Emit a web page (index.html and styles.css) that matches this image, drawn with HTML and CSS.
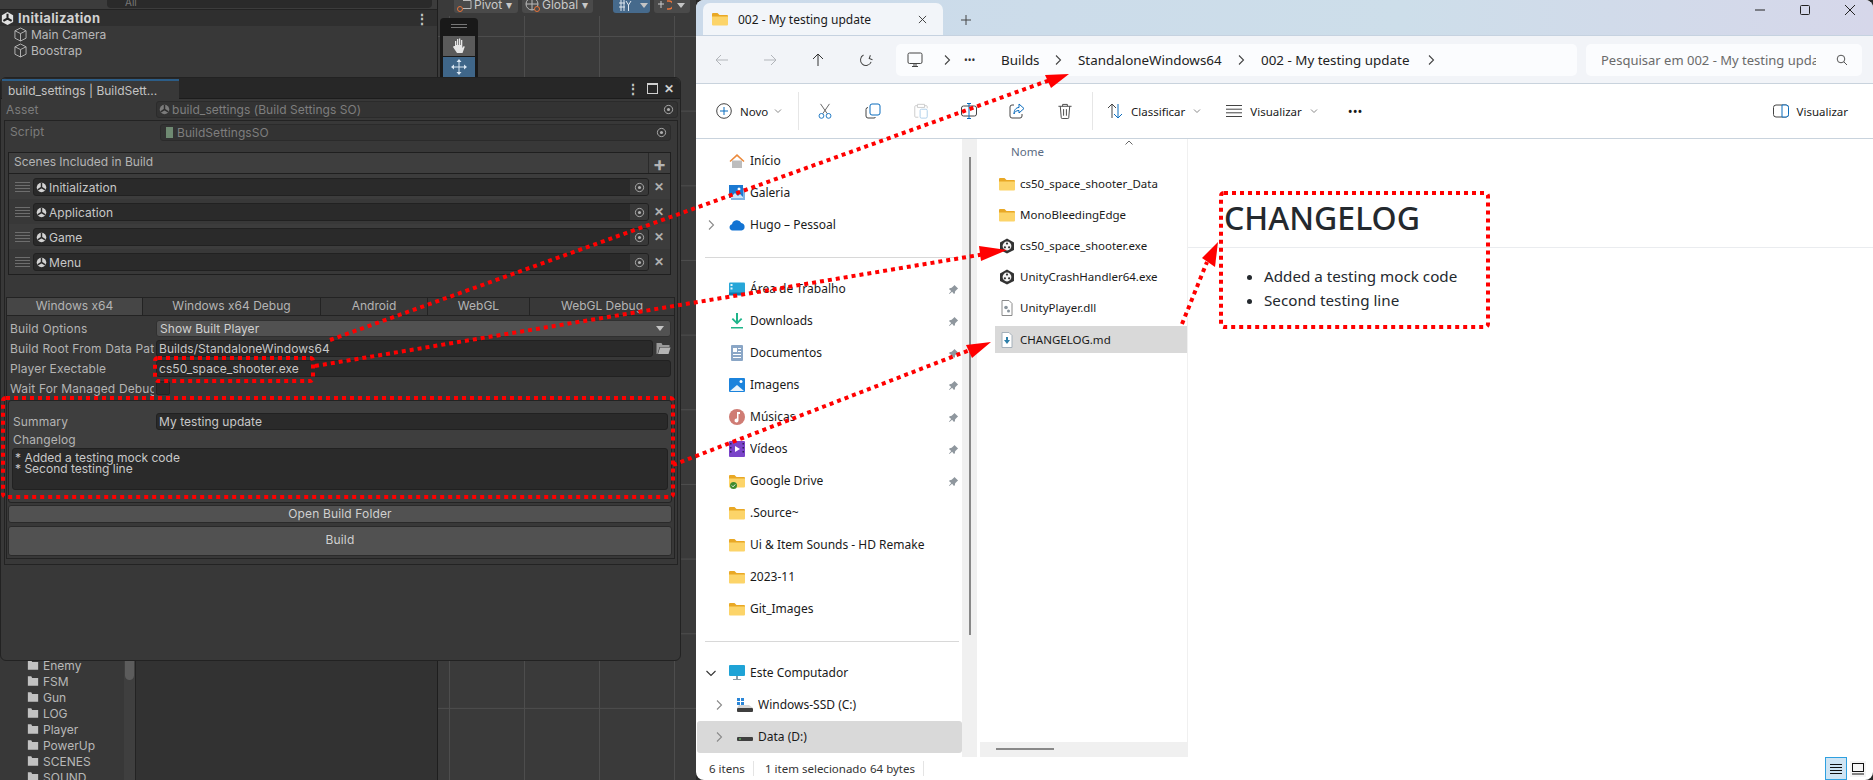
FILE: index.html
```html
<!DOCTYPE html>
<html lang="en">
<head>
    <meta charset="UTF-8">
    <title>Build settings and changelog</title>
    <link rel="stylesheet" href="styles.css">
</head>
<body>
    <!-- icon sprites -->
    <svg class="sprites" width="0" height="0">
        <defs>
            <symbol id="i-unity" viewBox="0 0 16 16"><path d="M8 1l6 3.400v7.200L8 15l-6-3.400V4.400z" fill="#e2e2e2"/><path d="M8 8V3M8 8l4.400 2.600M8 8l-4.400 2.600" stroke="#242424" stroke-width="2.200"/></symbol>
            <symbol id="i-scene" viewBox="0 0 12 12"><circle cx="6" cy="6" r="5.200" fill="#d2d2d2"/><path d="M6 6V1M6 6l4.200 2.500M6 6L1.800 8.500" stroke="#2a2a2a" stroke-width="1.600"/></symbol>
            <symbol id="i-cube" viewBox="0 0 14 16"><path d="M7 1l6 3v8l-6 3-6-3V4zM1 4l6 3 6-3M7 7v8" fill="none" stroke="#b8b8b8"/></symbol>
            <symbol id="i-target" viewBox="0 0 12 12"><circle cx="6" cy="6" r="4.500" fill="none" stroke="#b0b0b0"/><circle cx="6" cy="6" r="1.700" fill="#b0b0b0"/></symbol>
            <symbol id="i-ufolder" viewBox="0 0 14 13"><path d="M1 1h4l1 2h7v9H1z" fill="#c2c2c2"/></symbol>
            <symbol id="i-folder" viewBox="0 0 16 14"><path d="M0 2a1 1 0 011-1h4.500l2 2H15a1 1 0 011 1v1H0z" fill="#e9a825"/><path d="M0 4.500h16V12.500a1 1 0 01-1 1H1a1 1 0 01-1-1z" fill="#fcd469"/></symbol>
            <symbol id="i-pin" viewBox="0 0 12 12"><path d="M7 1l4 4-1 .6-2.200 2.400-.3 2-1 1-2-2.500L1.500 11 1 10.500 3.500 7.500 1 5.500l1-1 2-.3L6.400 2z" fill="#8f979e"/></symbol>
            <symbol id="i-chev" viewBox="0 0 8 12"><path d="M2 1.500L6.500 6 2 10.500" fill="none" stroke="currentColor" stroke-width="1.100"/></symbol>
            <symbol id="i-caret" viewBox="0 0 8 6"><path d="M1 1.500L4 4.500 7 1.500" fill="none" stroke="#8a8a8a"/></symbol>
            <symbol id="i-drive" viewBox="0 0 16 8"><path d="M3 0h10l3 4H0z" fill="#d5d5d5"/><rect y="4" width="16" height="4" rx="1" fill="#3f3f3f"/><rect x="2" y="5.500" width="2" height="1" fill="#6fdc6f"/></symbol>
            <symbol id="i-exe" viewBox="0 0 16 16"><path d="M8 .5l7 4v7.500l-7 3.600-7-3.600V4.500z" fill="#333"/><circle cx="8" cy="8" r="4.400" fill="#f4f4f4"/><circle cx="8" cy="5.600" r="1.100" fill="#333"/><circle cx="5.900" cy="9.300" r="1.100" fill="#333"/><circle cx="10.100" cy="9.300" r="1.100" fill="#333"/></symbol>
        </defs>
    </svg>

    <!-- unity editor in the back -->
    <div class="unity">
        <div class="unity-left">
            <div class="hierarchy">
                <div class="search-row"><div class="search-box"><span>All</span></div></div>
                <div class="scene-head">
                    <svg class="ico-16"><use href="#i-unity"/></svg>
                    <span>Initialization</span>
                    <b class="kebab">⋮</b>
                </div>
                <div class="tree-item"><svg class="ico-cube"><use href="#i-cube"/></svg>Main Camera</div>
                <div class="tree-item"><svg class="ico-cube"><use href="#i-cube"/></svg>Boostrap</div>
            </div>
            <div class="project">
                <div class="project-tree">
                    <div class="project-item"><svg class="ico-ufolder"><use href="#i-ufolder"/></svg>Enemy</div>
                    <div class="project-item"><svg class="ico-ufolder"><use href="#i-ufolder"/></svg>FSM</div>
                    <div class="project-item"><svg class="ico-ufolder"><use href="#i-ufolder"/></svg>Gun</div>
                    <div class="project-item"><svg class="ico-ufolder"><use href="#i-ufolder"/></svg>LOG</div>
                    <div class="project-item"><svg class="ico-ufolder"><use href="#i-ufolder"/></svg>Player</div>
                    <div class="project-item"><svg class="ico-ufolder"><use href="#i-ufolder"/></svg>PowerUp</div>
                    <div class="project-item"><svg class="ico-ufolder"><use href="#i-ufolder"/></svg>SCENES</div>
                    <div class="project-item"><svg class="ico-ufolder"><use href="#i-ufolder"/></svg>SOUND</div>
                </div>
                <div class="project-scroll"><div class="project-thumb"></div></div>
                <div class="project-files"></div>
            </div>
        </div>
        <div class="scene-view">
            <div class="scene-bar">
                <span class="scene-btn pivot">
                    <svg width="16" height="13" viewBox="0 0 16 13"><path d="M7 .5h8v8H7" fill="none" stroke="#bbb"/><circle cx="4" cy="9" r="2.500" fill="none" stroke="#e8743b"/></svg>
                    Pivot ▾
                </span>
                <span class="scene-btn global">
                    <svg width="16" height="13" viewBox="0 0 16 13"><circle cx="8" cy="4" r="6" fill="none" stroke="#bbb"/><path d="M2 4h12M8 -2v12" stroke="#bbb" fill="none"/><circle cx="13" cy="9" r="2.500" fill="#4a4a4a" stroke="#e8743b"/></svg>
                    Global ▾
                </span>
                <span class="scene-btn blue">
                    <svg width="14" height="12" viewBox="0 0 14 12"><path d="M1 3h6M1 7h6M3 0v11M6 0v11M8 1l2.500 4L13 1M10.500 5v6" stroke="#e0e8f0" fill="none"/></svg>
                    <i class="mini-arrow"></i>
                </span>
                <span class="scene-btn snap">
                    <svg width="14" height="12" viewBox="0 0 14 12"><path d="M0 4h6M3 1v7" stroke="#ccc" fill="none"/><path d="M9 1h2a3.500 3.500 0 010 8H9" stroke="#e8743b" stroke-width="1.500" fill="none"/></svg>
                    <i class="mini-arrow"></i>
                </span>
            </div>
            <div class="scene-tools">
                <div class="tools-grip"></div>
                <div class="tool hand">
                    <svg width="16" height="18" viewBox="0 0 16 18"><path d="M4 9V4h1.300v4h.7V2h1.300v6h.7V1.500h1.300V8h.7V3h1.300v8l1.500-2 1 .7L11.500 16H6L2 10l.8-1z" fill="#e6e6e6"/></svg>
                </div>
                <div class="tool move">
                    <svg width="18" height="18" viewBox="0 0 18 18"><path d="M9 1L6.500 4h5zM9 17l-2.500-3h5zM1 9l3-2.500v5zM17 9l-3-2.500v5zM8.500 4h1v10h-1zM4 8.500h10v1H4z" fill="#d9e6f2"/></svg>
                </div>
            </div>
        </div>
    </div>

    <!-- floating build settings window -->
    <div class="build-window">
        <div class="tabstrip">
            <div class="tab">build_settings | BuildSett...</div>
            <div class="win-actions">
                <b class="kebab">⋮</b>
                <span class="maximize"></span>
                <span class="close-x">✕</span>
            </div>
        </div>
        <div class="asset-row">
            <span class="label dim">Asset</span>
            <div class="field dim-field">
                <svg class="ico-small faded"><use href="#i-scene"/></svg>
                <span class="grow">build_settings (Build Settings SO)</span>
                <svg class="ico-small"><use href="#i-target"/></svg>
            </div>
        </div>
        <div class="inspector">
            <div class="script-row">
                <span class="label dim">Script</span>
                <div class="field dim-field">
                    <span class="script-ico"></span>
                    <span class="grow">BuildSettingsSO</span>
                    <svg class="ico-small"><use href="#i-target"/></svg>
                </div>
            </div>

            <div class="scene-list">
                <div class="list-head"><span>Scenes Included in Build</span><b class="add">+</b></div>
                <div class="scene-row">
                    <span class="grip"></span>
                    <div class="field"><svg class="ico-small"><use href="#i-scene"/></svg><span class="grow">Initialization</span><span class="pick"><svg class="ico-small"><use href="#i-target"/></svg></span></div>
                    <span class="remove">✕</span>
                </div>
                <div class="scene-row alt">
                    <span class="grip"></span>
                    <div class="field"><svg class="ico-small"><use href="#i-scene"/></svg><span class="grow">Application</span><span class="pick"><svg class="ico-small"><use href="#i-target"/></svg></span></div>
                    <span class="remove">✕</span>
                </div>
                <div class="scene-row">
                    <span class="grip"></span>
                    <div class="field"><svg class="ico-small"><use href="#i-scene"/></svg><span class="grow">Game</span><span class="pick"><svg class="ico-small"><use href="#i-target"/></svg></span></div>
                    <span class="remove">✕</span>
                </div>
                <div class="scene-row alt">
                    <span class="grip"></span>
                    <div class="field"><svg class="ico-small"><use href="#i-scene"/></svg><span class="grow">Menu</span><span class="pick"><svg class="ico-small"><use href="#i-target"/></svg></span></div>
                    <span class="remove">✕</span>
                </div>
            </div>

            <div class="platform-tabs">
                <span class="ptab active w1">Windows x64</span>
                <span class="ptab w2">Windows x64 Debug</span>
                <span class="ptab w3">Android</span>
                <span class="ptab w4">WebGL</span>
                <span class="ptab w5">WebGL Debug</span>
            </div>
            <div class="platform-body">
                <div class="prop-row">
                    <span class="label">Build Options</span>
                    <div class="field select"><span class="grow">Show Built Player</span><i class="select-arrow"></i></div>
                </div>
                <div class="prop-row">
                    <span class="label">Build Root From Data Path</span>
                    <div class="field"><span class="grow">Builds/StandaloneWindows64</span></div>
                    <svg class="ico-open" viewBox="0 0 14 13"><path d="M0 1h5l1 2h7v2H3L1 12H0z" fill="#9a9a9a"/><path d="M3.500 5.500H14L12 12H1.500z" fill="#b4b4b4"/></svg>
                </div>
                <div class="prop-row">
                    <span class="label">Player Exectable</span>
                    <div class="field"><span class="grow">cs50_space_shooter.exe</span></div>
                </div>
                <div class="prop-row">
                    <span class="label">Wait For Managed Debugger</span>
                    <span class="checkbox"></span>
                </div>
                <div class="changelog-box">
                    <div class="prop-row summary-row">
                        <span class="label inner">Summary</span>
                        <div class="field"><span class="grow">My testing update</span></div>
                    </div>
                    <div class="label changelog-label">Changelog</div>
                    <div class="textarea">* Added a testing mock code<br>* Second testing line</div>
                </div>
                <div class="unity-btn open-btn">Open Build Folder</div>
                <div class="unity-btn build-btn">Build</div>
            </div>
        </div>
    </div>

    <!-- file explorer -->
    <div class="explorer">
        <div class="titlebar">
            <div class="ex-tab">
                <svg class="ico-tab"><use href="#i-folder"/></svg>
                <span class="grow">002 - My testing update</span>
                <svg class="ico-x" viewBox="0 0 10 10"><path d="M1 1l8 8M9 1l-8 8" stroke="#333" fill="none"/></svg>
            </div>
            <svg class="new-tab" viewBox="0 0 10 10"><path d="M5 0v10M0 5h10" stroke="#444" fill="none"/></svg>
            <div class="win-btns">
                <svg viewBox="0 0 10 10"><path d="M0 5h10" stroke="#222" fill="none"/></svg>
                <svg viewBox="0 0 10 10"><rect x=".5" y=".5" width="9" height="9" rx="1" stroke="#222" fill="none"/></svg>
                <svg viewBox="0 0 10 10"><path d="M0 0l10 10M10 0L0 10" stroke="#222" fill="none"/></svg>
            </div>
        </div>
        <div class="addressbar">
            <div class="nav-btns">
                <svg viewBox="0 0 14 14"><path d="M13 7H1M6 2L1 7l5 5" stroke="#b2b5ba" fill="none"/></svg>
                <svg viewBox="0 0 14 14"><path d="M1 7h12M8 2l5 5-5 5" stroke="#b2b5ba" fill="none"/></svg>
                <svg viewBox="0 0 14 14"><path d="M7 13V1M2 6l5-5 5 5" stroke="#333" fill="none"/></svg>
                <svg viewBox="0 0 14 14"><path d="M12.500 7A5.500 5.500 0 113 3.200M9.500 1v3.500H13" transform="rotate(20 7 7)" stroke="#444" fill="none"/></svg>
            </div>
            <div class="crumbs">
                <svg class="ico-monitor" viewBox="0 0 16 16"><rect x="1" y="1" width="14" height="10.500" rx="1.500" fill="none" stroke="#444"/><path d="M5 14.500h6M7 12v2M9 12v2" stroke="#444" fill="none"/></svg>
                <svg class="crumb-chev m1"><use href="#i-chev"/></svg>
                <span class="crumb-dots">•••</span>
                <span class="crumb c1">Builds</span>
                <svg class="crumb-chev"><use href="#i-chev"/></svg>
                <span class="crumb c2">StandaloneWindows64</span>
                <svg class="crumb-chev"><use href="#i-chev"/></svg>
                <span class="crumb c3">002 - My testing update</span>
                <svg class="crumb-chev"><use href="#i-chev"/></svg>
            </div>
            <div class="searchbox">
                <span class="grow clip">Pesquisar em 002 - My testing update</span>
                <svg class="ico-search" viewBox="0 0 12 12"><circle cx="5" cy="5" r="3.800" stroke="#555" fill="none"/><path d="M7.800 7.800L11 11" stroke="#555" fill="none"/></svg>
            </div>
        </div>
        <div class="toolbar">
            <div class="tb-novo">
                <svg class="tb-ico" viewBox="0 0 16 16"><circle cx="8" cy="8" r="7.300" fill="none" stroke="#444"/><path d="M8 4v8M4 8h8" stroke="#0b6cbd" fill="none"/></svg>
                <span>Novo</span>
                <svg class="caret"><use href="#i-caret"/></svg>
            </div>
            <i class="tb-sep"></i>
            <div class="tb-icons">
                <svg class="tb-ico" viewBox="0 0 16 18"><path d="M3 1l7.500 11M13 1L5.500 12" stroke="#555" fill="none"/><circle cx="4" cy="14.500" r="2.700" stroke="#0b6cbd" fill="none"/><circle cx="12" cy="14.500" r="2.700" stroke="#0b6cbd" fill="none"/></svg>
                <svg class="tb-ico" viewBox="0 0 16 16"><rect x="5" y="1" width="10" height="11" rx="2" stroke="#0b6cbd" fill="none"/><path d="M3 4.500A2 2 0 001 6.500V13a2 2 0 002 2h6a2 2 0 001.700-1" stroke="#444" fill="none"/></svg>
                <svg class="tb-ico" viewBox="0 0 16 18"><path d="M4 3H2a1 1 0 00-1 1v11a1 1 0 001 1h3M12 3h2a1 1 0 011 1v2M4 1.500h8V5H4z" stroke="#c8c8c8" fill="none"/><rect x="7" y="7" width="8" height="10" rx="1.500" stroke="#a8cbe8" fill="none"/></svg>
                <svg class="tb-ico" viewBox="0 0 16 16"><rect x=".5" y="3" width="15" height="10" rx="2" stroke="#444" fill="none"/><path d="M8 .5v15M6 .5h4M6 15.500h4" stroke="#0b6cbd" fill="none"/></svg>
                <svg class="tb-ico" viewBox="0 0 16 16"><path d="M5 2H3a2 2 0 00-2 2v9a2 2 0 002 2h8a2 2 0 002-2v-2" stroke="#444" fill="none"/><path d="M10 1l5 4.500L10 10V7.500C7 7.500 5.500 9 5 11c0-4 2-6.500 5-6.500z" stroke="#0b6cbd" fill="none"/></svg>
                <svg class="tb-ico" viewBox="0 0 16 17"><path d="M1 3.500h14M5.500 3.500V1.500h5v2M3 3.500l1 12a1 1 0 001 1h6a1 1 0 001-1l1-12M6.500 6.500v7M9.500 6.500v7" stroke="#444" fill="none"/></svg>
            </div>
            <i class="tb-sep sep2"></i>
            <div class="tb-text sort">
                <svg class="tb-ico" viewBox="0 0 16 16"><path d="M5 15V1M1 5l4-4 4 4" stroke="#444" fill="none"/><path d="M11 1v14M7 11l4 4 4-4" stroke="#0b6cbd" fill="none"/></svg>
                <span>Classificar</span>
                <svg class="caret"><use href="#i-caret"/></svg>
            </div>
            <div class="tb-text view">
                <svg class="tb-ico" viewBox="0 0 16 14"><path d="M0 1.500h16M0 5.200h16M0 8.800h16M0 12.500h16" stroke="#444" fill="none"/></svg>
                <span>Visualizar</span>
                <svg class="caret"><use href="#i-caret"/></svg>
            </div>
            <span class="tb-more">•••</span>
            <div class="tb-text preview-toggle">
                <svg class="tb-ico" viewBox="0 0 16 14"><rect x=".5" y="1" width="15" height="12" rx="2.500" stroke="#444" fill="none"/><path d="M9 1h4a2.500 2.500 0 012.500 2.500v7A2.500 2.500 0 0113 13H9z" stroke="#0b6cbd" fill="#fff"/></svg>
                <span>Visualizar</span>
            </div>
        </div>

        <div class="ex-body">
            <div class="ex-main">
                <div class="sidebar">
                    <div class="nav-list">
                        <div class="nav-row"><span class="chev"></span><svg class="nav-ico" viewBox="0 0 16 16"><path d="M3 7.500V15h10V7.500z" fill="#bdbdbd"/><path d="M.5 8L8 1l7.500 7-1 1L8 3.200 1.500 9z" fill="#ec8a3c"/></svg><span class="grow">Início</span></div>
                        <div class="nav-row"><span class="chev"></span><svg class="nav-ico" viewBox="0 0 16 16"><rect x="2" y="3" width="14" height="12" fill="#7fb2e5"/><rect y="0" width="14" height="13" fill="#1b79d2"/><path d="M2 12l4-4 3 3 2-2 3 3v1H2z" fill="#cfe3f7"/><circle cx="10" cy="4" r="1.500" fill="#fff"/></svg><span class="grow">Galeria</span></div>
                        <div class="nav-row"><span class="chev"><svg><use href="#i-chev"/></svg></span><svg class="nav-ico" viewBox="0 0 16 12"><path d="M3.500 11.500A3.200 3.200 0 013 5.200 5 5 0 0112.300 4 3.800 3.800 0 0112.500 11.500z" fill="#1273d3"/></svg><span class="grow">Hugo – Pessoal</span></div>
                        <div class="nav-sep"></div>
                        <div class="nav-row"><span class="chev"></span><svg class="nav-ico" viewBox="0 0 16 13"><rect width="16" height="11" rx="1" fill="#27a6d8"/><rect y="10" width="16" height="3" fill="#0f7bb0"/><rect x="1.500" y="1.500" width="2" height="2" fill="#e5f6fb"/><rect x="1.500" y="5" width="2" height="2" fill="#e5f6fb"/></svg><span class="grow">Área de Trabalho</span><svg class="nav-pin"><use href="#i-pin"/></svg></div>
                        <div class="nav-row"><span class="chev"></span><svg class="nav-ico" viewBox="0 0 16 16"><path d="M7 0h2v8l3-3 1.300 1.300L8 11.500 2.700 6.300 4 5l3 3zM2 14h12v1.500H2z" fill="#1eb58a"/></svg><span class="grow">Downloads</span><svg class="nav-pin"><use href="#i-pin"/></svg></div>
                        <div class="nav-row"><span class="chev"></span><svg class="nav-ico" viewBox="0 0 16 16"><rect x="2" width="12" height="16" rx="1" fill="#8aa6c6"/><path d="M4 3h4v4H4zM9 3h3v1H9zM9 6h3v1H9zM4 9h8v1H4zM4 12h8v1H4z" fill="#fff"/></svg><span class="grow">Documentos</span><svg class="nav-pin"><use href="#i-pin"/></svg></div>
                        <div class="nav-row"><span class="chev"></span><svg class="nav-ico" viewBox="0 0 16 14"><rect width="16" height="14" rx="1" fill="#1b83dc"/><path d="M1 13l7-6 7 6z" fill="#e8f3fb"/><circle cx="12" cy="3.500" r="1.500" fill="#fff"/></svg><span class="grow">Imagens</span><svg class="nav-pin"><use href="#i-pin"/></svg></div>
                        <div class="nav-row"><span class="chev"></span><svg class="nav-ico" viewBox="0 0 16 16"><circle cx="8" cy="8" r="8" fill="#cf7c74"/><path d="M8 3h3v2H9.500v6.500a2 2 0 11-1.500-2z" fill="#fff"/></svg><span class="grow">Músicas</span><svg class="nav-pin"><use href="#i-pin"/></svg></div>
                        <div class="nav-row"><span class="chev"></span><svg class="nav-ico" viewBox="0 0 16 16"><rect width="16" height="16" rx="1" fill="#7a44c9"/><path d="M6 5l5 3-5 3z" fill="#fff"/><path d="M1 2h1.500v1.500H1zM1 6h1.500v1.500H1zM1 10h1.500v1.500H1zM13.500 2H15v1.500h-1.500zM13.500 6H15v1.500h-1.500zM13.500 10H15v1.500h-1.500z" fill="#2f1b5a"/></svg><span class="grow">Vídeos</span><svg class="nav-pin"><use href="#i-pin"/></svg></div>
                        <div class="nav-row"><span class="chev"></span><span class="nav-stack"><svg class="nav-ico"><use href="#i-folder"/></svg><svg class="nav-check" viewBox="0 0 8 8"><circle cx="4" cy="4" r="4" fill="#3f8b2f"/><path d="M2 4l1.500 1.500L6 2.800" stroke="#fff" fill="none"/></svg></span><span class="grow">Google Drive</span><svg class="nav-pin"><use href="#i-pin"/></svg></div>
                        <div class="nav-row"><span class="chev"></span><svg class="nav-ico"><use href="#i-folder"/></svg><span class="grow">.Source~</span></div>
                        <div class="nav-row"><span class="chev"></span><svg class="nav-ico"><use href="#i-folder"/></svg><span class="grow">Ui &amp; Item Sounds - HD Remake</span></div>
                        <div class="nav-row"><span class="chev"></span><svg class="nav-ico"><use href="#i-folder"/></svg><span class="grow">2023-11</span></div>
                        <div class="nav-row"><span class="chev"></span><svg class="nav-ico"><use href="#i-folder"/></svg><span class="grow">Git_Images</span></div>
                        <div class="nav-sep"></div>
                        <div class="nav-row"><span class="chev"><svg class="down"><use href="#i-chev"/></svg></span><svg class="nav-ico" viewBox="0 0 16 16"><rect width="16" height="11" rx="1" fill="#1fa3d6"/><path d="M7 11h2v3H7zM4 14h8v1H4z" fill="#8a9aa5"/></svg><span class="grow">Este Computador</span></div>
                        <div class="nav-row indent"><span class="chev"><svg><use href="#i-chev"/></svg></span><svg class="nav-ico drive-c" viewBox="0 0 16 14"><path d="M0 0h3v3H0zM4 0h3v3H4zM0 4h3v3H0zM4 4h3v3H4z" fill="#2a86d8"/><path d="M2 7h10l4 3H0z" fill="#d5d5d5"/><rect y="10" width="16" height="4" rx="1" fill="#3f3f3f"/></svg><span class="grow">Windows-SSD (C:)</span></div>
                        <div class="nav-row indent selected"><span class="chev"><svg><use href="#i-chev"/></svg></span><svg class="nav-ico drive-d"><use href="#i-drive"/></svg><span class="grow">Data (D:)</span></div>
                    </div>
                    <div class="side-scroll"><div class="side-thumb"></div></div>
                </div>

                <div class="files">
                    <div class="files-head">Nome</div>
                    <svg class="sort-up" viewBox="0 0 8 5"><path d="M.5 4.500L4 1l3.500 3.500" stroke="#666" fill="none"/></svg>
                    <div class="file"><svg class="file-ico"><use href="#i-folder"/></svg>cs50_space_shooter_Data</div>
                    <div class="file"><svg class="file-ico"><use href="#i-folder"/></svg>MonoBleedingEdge</div>
                    <div class="file"><svg class="file-ico"><use href="#i-exe"/></svg>cs50_space_shooter.exe</div>
                    <div class="file"><svg class="file-ico"><use href="#i-exe"/></svg>UnityCrashHandler64.exe</div>
                    <div class="file"><svg class="file-ico" viewBox="0 0 16 16"><path d="M3 .5h7l3 3v12H3z" fill="#fff" stroke="#8a8a8a"/><circle cx="7" cy="7.500" r="1.800" fill="#8a949c"/><circle cx="9.500" cy="11" r="1.500" fill="#8a949c"/></svg>UnityPlayer.dll</div>
                    <div class="file selected"><svg class="file-ico" viewBox="0 0 16 16"><path d="M3 .5h7l3 3v12H3z" fill="#fff" stroke="#a4b0ba"/><path d="M7 5h2v3h2L8 12 5 8h2z" fill="#2d7ea8"/></svg>CHANGELOG.md</div>
                    <div class="files-scroll"><div class="files-thumb"></div></div>
                </div>

                <div class="md-preview">
                    <h1>CHANGELOG</h1>
                    <ul>
                        <li>Added a testing mock code</li>
                        <li>Second testing line</li>
                    </ul>
                </div>
            </div>
            <div class="statusbar">
                <span class="st-count">6 itens</span>
                <i class="st-sep"></i>
                <span class="st-sel">1 item selecionado</span>
                <span class="st-size">64 bytes</span>
                <i class="st-sep"></i>
                <div class="view-btns">
                    <span class="vbtn on"><svg viewBox="0 0 12 10"><path d="M0 .5h12M0 3.500h12M0 6.500h12M0 9.500h12" stroke="#111" fill="none"/></svg></span>
                    <span class="vbtn"><svg viewBox="0 0 12 12"><rect x=".5" y=".5" width="11" height="8" stroke="#111" fill="none"/><path d="M0 11h12" stroke="#111"/></svg></span>
                </div>
            </div>
        </div>
    </div>

    <!-- red annotations drawn over everything -->
    <svg class="marks" viewBox="0 0 1873 780">
        <g class="mark-lines">
            <rect x="155" y="358" width="158" height="23" rx="3"/>
            <rect x="3" y="398" width="670" height="99" rx="3"/>
            <rect x="1221" y="193" width="267" height="134" rx="3"/>
            <path d="M330 340L1050 80"/>
            <path d="M315 366L985 254"/>
            <path d="M673 465L975 348"/>
            <path d="M1182 324L1207 262"/>
        </g>
        <g fill="#f00">
            <polygon points="1045,75 1069,74 1051,88"/>
            <polygon points="979,246 1007,250 981,261"/>
            <polygon points="966,345 991,342 972,358"/>
            <polygon points="1202,258 1218,242 1215,267"/>
        </g>
    </svg>
</body>
</html>
```

FILE: styles.css
```css
* {
    box-sizing: border-box;
}
html, body {
    margin: 0;
    padding: 0;
}
body {
    position: relative;
    width: 1873px;
    height: 780px;
    overflow: hidden;
    background-color: #282828;
    font-family: Inter, "Liberation Sans", sans-serif;
}
svg {
    display: block;
    flex: none;
}
.sprites {
    position: absolute;
}
.grow {
    flex: 1;
    min-width: 0;
    white-space: nowrap;
    overflow: hidden;
}
.kebab {
    font-weight: bold;
    font-size: 14px;
    color: #c4c4c4;
}

/* unity editor in the back */
.unity {
    position: absolute;
    left: 0;
    top: 0;
    width: 696px;
    height: 780px;
    display: flex;
    color: #b8b8b8;
    font-size: 12px;
}
.unity-left {
    width: 438px;
    height: 780px;
    overflow: hidden;
    background-color: #383838;
    border-right: 1px solid #1e1e1e;
}
.hierarchy {
    height: 657px;
}
.search-row {
    height: 10px;
    background-color: #3c3c3c;
    border-bottom: 1px solid #232323;
    padding-left: 107px;
}
.search-box {
    width: 325px;
    height: 8px;
    background-color: #2a2a2a;
    border-radius: 0 0 4px 4px;
    font-size: 10px;
    line-height: 4px;
    color: #777;
    padding-left: 18px;
    overflow: hidden;
}
.scene-head {
    display: flex;
    align-items: center;
    height: 16px;
    background-color: #2f2f2f;
    color: #d2d2d2;
    font-weight: bold;
    font-size: 13px;
    letter-spacing: .35px;
    gap: 3px;
    padding-right: 8px;
}
.scene-head span {
    flex: 1;
}
.ico-16 {
    width: 15px;
    height: 15px;
}
.tree-item {
    display: flex;
    align-items: center;
    gap: 4px;
    height: 16px;
    padding-left: 14px;
}
.ico-cube {
    width: 13px;
    height: 15px;
}
.project {
    height: 123px;
    display: flex;
}
.project-tree {
    width: 124px;
    padding-left: 27px;
}
.project-item {
    display: flex;
    align-items: center;
    gap: 4px;
    height: 16px;
    white-space: nowrap;
}
.ico-ufolder {
    width: 12px;
    height: 12px;
}
.project-scroll {
    width: 11px;
    background-color: #3f3f3f;
}
.project-thumb {
    height: 23px;
    background-color: #5c5c5c;
    border-radius: 0 0 5px 5px;
    margin: 0 1px;
}
.project-files {
    flex: 1;
    background-color: #323232;
    border-left: 1px solid #232323;
}
.scene-view {
    flex: 1;
    position: relative;
    background-color: #3a3a3a;
    background-image:
        linear-gradient(#4d4d4d 1px, transparent 1px),
        linear-gradient(90deg, #4d4d4d 1px, transparent 1px);
    background-size: 75px 74.67px;
    background-position: 11px 36px;
}
.scene-bar {
    height: 16px;
    background-color: #3a3a3a;
    display: flex;
    padding-left: 16px;
    gap: 4px;
}
.scene-btn {
    display: flex;
    align-items: flex-start;
    gap: 2px;
    height: 13px;
    padding-left: 2px;
    border-radius: 0 0 3px 3px;
    background-color: #4a4a4a;
    font-size: 12px;
    line-height: 9px;
    color: #c8c8c8;
    white-space: nowrap;
    overflow: hidden;
}
.pivot {
    width: 64px;
}
.global {
    width: 71px;
}
.blue {
    width: 37px;
    margin-left: 16px;
    padding-left: 5px;
    gap: 8px;
    background-color: #466a8c;
}
.snap {
    width: 36px;
    padding-left: 4px;
    gap: 5px;
}
.mini-arrow {
    margin-top: 3px;
    border-left: 4px solid transparent;
    border-right: 4px solid transparent;
    border-top: 5px solid #c4c4c4;
}
.scene-tools {
    position: absolute;
    left: 2px;
    top: 18px;
    width: 38px;
    height: 70px;
    padding: 0 3px;
    background-color: #191919;
    border-radius: 4px 4px 0 0;
}
.tools-grip {
    width: 16px;
    height: 4px;
    margin: 6px auto 8px;
    border-top: 1px solid #777;
    border-bottom: 1px solid #777;
}
.tool {
    height: 20px;
    margin-bottom: 1px;
    display: flex;
    align-items: center;
    justify-content: center;
}
.hand {
    background-color: #5a5a5a;
}
.move {
    background-color: #3f6689;
}

/* floating build settings window */
.build-window {
    position: absolute;
    left: 0;
    top: 77px;
    width: 681px;
    height: 584px;
    background-color: #383838;
    border: 1px solid #222;
    border-radius: 6px;
    color: #b4b4b4;
    font-size: 12px;
    letter-spacing: .15px;
}
.tabstrip {
    display: flex;
    justify-content: space-between;
    height: 21px;
    padding: 1px 4px 0 1px;
    background-color: #272727;
    border-bottom: 1px solid #1c1c1c;
    border-radius: 6px 6px 0 0;
}
.tab {
    width: 177px;
    height: 20px;
    padding: 2px 0 0 6px;
    line-height: 15px;
    font-size: 12px;
    letter-spacing: 0;
    color: #c4c4c4;
    background-color: #383838;
    border-top: 2px solid #2c5d87;
    white-space: nowrap;
}
.win-actions {
    display: flex;
    align-items: center;
    gap: 6px;
}
.win-actions .kebab {
    margin-right: 1px;
}
.maximize {
    width: 11px;
    height: 11px;
    border: 1px solid #d0d0d0;
    border-top-width: 2px;
}
.close-x {
    width: 12px;
    font-size: 12px;
    font-weight: bold;
    color: #d0d0d0;
}
.label {
    width: 145px;
    margin-right: 2px;
    flex: none;
    padding-left: 1px;
    white-space: nowrap;
    overflow: hidden;
}
.dim {
    color: #7c7c7c;
}
.field {
    flex: 1;
    min-width: 0;
    display: flex;
    align-items: center;
    height: 17px;
    padding-left: 2px;
    padding-right: 3px;
    gap: 2px;
    background-color: #2a2a2a;
    border: 1px solid #212121;
    border-radius: 3px;
    color: #c8c8c8;
    letter-spacing: .05px;
    white-space: nowrap;
}
.dim-field {
    background-color: #333;
    color: #7e7e7e;
    border-color: #2b2b2b;
}
.ico-small {
    width: 11px;
    height: 11px;
}
.faded {
    opacity: .45;
}
.asset-row {
    display: flex;
    align-items: center;
    margin-top: 2px;
    padding: 0 2px 0 4px;
}
.asset-row .label {
    width: 149px;
    padding-bottom: 1px;
}
.inspector {
    margin: 2px 2px 0 3px;
    height: 445px;
    padding: 3px 2px 0 1px;
    border: 1px solid #232323;
}
.script-row {
    display: flex;
    align-items: center;
    padding: 0 4px 0 3px;
}
.script-row .label {
    width: 149px;
    padding-bottom: 2px;
}
.script-ico {
    width: 7px;
    height: 11px;
    margin: 0 2px 0 3px;
    background-color: #6f8a72;
    flex: none;
}
.scene-list {
    margin: 11px 4px 0 2px;
    height: 123px;
    border: 1px solid #1f1f1f;
    background-color: #3c3c3c;
}
.list-head {
    display: flex;
    justify-content: space-between;
    height: 21px;
    padding-left: 5px;
    line-height: 18px;
    background-color: #3e3e3e;
    border-bottom: 1px solid #1f1f1f;
    letter-spacing: 0;
}
.add {
    width: 22px;
    height: 20px;
    text-align: center;
    font-size: 20px;
    font-weight: bold;
    line-height: 22px;
    color: #b4b4b4;
    border-left: 1px solid #2a2a2a;
}
.scene-row {
    display: flex;
    align-items: center;
    height: 25px;
    padding-left: 6px;
    padding-top: 1px;
    background-color: #3c3c3c;
}
.alt {
    background-color: #383838;
}
.grip {
    width: 15px;
    height: 10px;
    margin-right: 3px;
    flex: none;
    background-image: repeating-linear-gradient(#6e6e6e 0 1px, transparent 1px 3px);
}
.scene-row .field {
    padding-right: 0;
    height: 18px;
}
.pick {
    width: 18px;
    height: 16px;
    display: flex;
    align-items: center;
    justify-content: center;
    background-color: #383838;
    border-radius: 0 2px 2px 0;
}
.remove {
    width: 21px;
    padding-bottom: 2px;
    text-align: center;
    font-size: 12px;
    font-weight: bold;
    color: #b0b0b0;
    flex: none;
}
.platform-tabs {
    display: flex;
    margin: 22px 0 0 0;
    height: 19px;
    border: 1px solid #232323;
    background-color: #383838;
    letter-spacing: 0;
}
.ptab {
    text-align: center;
    line-height: 15px;
    border-right: 1px solid #232323;
    white-space: nowrap;
    overflow: hidden;
}
.ptab.active {
    background-color: #464646;
}
.w1 {
    width: 136px;
}
.w2 {
    width: 178px;
}
.w3 {
    width: 107px;
}
.w4 {
    width: 102px;
}
.w5 {
    flex: 1;
    border-right: none;
}
.platform-body {
    height: 243px;
    padding: 2px 3px 0 2px;
    border: 1px solid #232323;
    border-top: none;
}
.prop-row {
    display: flex;
    align-items: center;
    height: 20px;
}
.select {
    padding-left: 3px;
    background-color: #515151;
    border-color: #303030;
    color: #d0d0d0;
}
.select-arrow {
    width: 0;
    height: 0;
    margin-right: 3px;
    border-left: 4px solid transparent;
    border-right: 4px solid transparent;
    border-top: 5px solid #c4c4c4;
}
.ico-open {
    width: 15px;
    height: 13px;
    margin-left: 3px;
}
.checkbox {
    width: 14px;
    height: 14px;
    background-color: #2b2b2b;
    border: 1px solid #232323;
    border-radius: 2px;
}
.changelog-box {
    margin: 2px -1px 0;
    height: 103px;
    padding: 11px 3px 0 3px;
    border: 1px solid #232323;
    border-radius: 3px;
    background-color: #3e3e3e;
}
.label.inner {
    width: 142px;
    padding-left: 1px;
}
.summary-row {
    height: 18px;
}
.changelog-label {
    width: auto;
    padding-left: 1px;
    margin-top: 2px;
    height: 16px;
    line-height: 16px;
}
.textarea {
    height: 42px;
    padding: 3px 2px;
    line-height: 11px;
    letter-spacing: 0;
    background-color: #2a2a2a;
    border: 1px solid #212121;
    border-radius: 3px;
    color: #c8c8c8;
}
.unity-btn {
    margin: 0 -1px;
    text-align: center;
    background-color: #515151;
    border: 1px solid #2a2a2a;
    border-radius: 3px;
    color: #d0d0d0;
}
.open-btn {
    margin-top: 2px;
    height: 18px;
    line-height: 15px;
}
.build-btn {
    margin-top: 3px;
    height: 30px;
    line-height: 26px;
}

/* file explorer */
.explorer {
    position: absolute;
    left: 696px;
    top: 0;
    width: 1177px;
    height: 780px;
    display: flex;
    flex-direction: column;
    background-color: #fff;
    border-radius: 8px;
    overflow: hidden;
    font-family: "Noto Sans", "Open Sans", sans-serif;
    font-size: 12px;
    color: #1a1a1a;
}
.titlebar {
    position: relative;
    height: 36px;
    flex: none;
    display: flex;
    align-items: flex-end;
    background: linear-gradient(90deg, #cbdaea 0%, #cddeea 60%, #d6d7ea 100%);
    border-bottom: 1px solid #c6d2e0;
    padding-left: 7px;
}
.ex-tab {
    display: flex;
    align-items: center;
    width: 240px;
    height: 32px;
    padding: 0 16px 0 9px;
    background-color: #f2f5f9;
    border-radius: 7px 7px 0 0;
}
.ico-tab {
    width: 16px;
    height: 14px;
    margin-right: 10px;
}
.ico-x {
    width: 9px;
    height: 9px;
}
.new-tab {
    width: 10px;
    height: 10px;
    margin: 0 0 10px 18px;
}
.win-btns {
    display: flex;
    gap: 35px;
    margin-left: auto;
    margin-right: 18px;
    margin-bottom: 20px;
}
.win-btns svg {
    width: 10px;
    height: 10px;
}
.addressbar {
    height: 48px;
    flex: none;
    display: flex;
    align-items: center;
    background-color: #f2f4f8;
    border-bottom: 1px solid #c9d3dd;
    font-size: 13px;
}
.nav-btns {
    display: flex;
    gap: 34px;
    width: 200px;
    padding-left: 19px;
}
.nav-btns svg {
    width: 14px;
    height: 14px;
}
.crumbs {
    display: flex;
    align-items: center;
    width: 681px;
    height: 32px;
    padding-left: 11px;
    background-color: #fbfcfe;
    border-radius: 5px;
    color: #222;
    font-size: 13.4px;
}
.ico-monitor {
    width: 16px;
    height: 16px;
}
.crumb-chev {
    width: 8px;
    height: 12px;
    margin: 0 16px;
    color: #444;
}
.m1 {
    margin: 0 0 0 20px;
}
.crumb-dots {
    margin-left: 13px;
    font-size: 10px;
    width: 37px;
    color: #333;
}
.crumb {
    white-space: nowrap;
}
.c1 {
    width: 37px;
}
.c2 {
    width: 143px;
}
.c3 {
    width: 150px;
}
.searchbox {
    display: flex;
    align-items: center;
    width: 276px;
    height: 32px;
    margin-left: 9px;
    padding: 0 14px 0 15px;
    background-color: #fbfcfe;
    border-radius: 5px;
    color: #6a6a6a;
}
.clip {
    margin-right: 20px;
}
.ico-search {
    width: 12px;
    height: 12px;
}
.toolbar {
    position: relative;
    height: 55px;
    flex: none;
    display: flex;
    align-items: center;
    padding-left: 20px;
    border-bottom: 1px solid #c9d3dd;
    font-size: 11.5px;
}
.tb-ico {
    width: 16px;
    height: 16px;
}
.tb-novo {
    display: flex;
    align-items: center;
    width: 82px;
}
.tb-novo span {
    margin: 0 6px 0 8px;
}
.caret {
    width: 8px;
    height: 6px;
}
.tb-sep {
    width: 1px;
    height: 38px;
    background-color: #e6e6e6;
}
.sep2 {
    margin-left: 19px;
}
.tb-icons {
    display: flex;
    gap: 32px;
    margin-left: 18px;
}
.tb-text {
    display: flex;
    align-items: center;
    gap: 8px;
}
.sort {
    margin-left: 14px;
}
.view {
    margin-left: 25px;
}
.tb-more {
    margin-left: 30px;
    font-size: 13px;
    line-height: 12px;
}
.preview-toggle {
    position: absolute;
    right: 25px;
    top: 19px;
}
.ex-body {
    flex: 1;
    min-height: 0;
    display: flex;
    flex-direction: column;
}
.ex-main {
    height: 618px;
    display: flex;
}
.sidebar {
    width: 281px;
    flex: none;
    display: flex;
}
.nav-list {
    width: 266px;
    padding-top: 6px;
    padding-left: 1px;
}
.nav-row {
    display: flex;
    align-items: center;
    height: 32px;
    padding-right: 3px;
    padding-left: 7px;
    border-radius: 3px;
}
.nav-row .grow {
    margin-top: -1px;
}
.nav-row.indent {
    padding-left: 15px;
}
.nav-row.selected {
    background-color: #d9d9d9;
}
.chev {
    width: 25px;
    flex: none;
    color: #8a8a8a;
}
.chev svg {
    width: 8px;
    height: 12px;
    margin-left: 3px;
}
.chev svg.down {
    transform: rotate(90deg);
    color: #333;
}
.nav-ico {
    width: 16px;
    height: 16px;
    margin-right: 5px;
}
.drive-d {
    height: 8px;
}
.drive-c {
    height: 14px;
}
.nav-stack {
    position: relative;
    flex: none;
}
.nav-check {
    position: absolute;
    left: 1px;
    top: 9px;
    width: 7px;
    height: 7px;
}
.nav-pin {
    width: 11px;
    height: 11px;
}
.nav-sep {
    height: 32px;
    display: flex;
    align-items: center;
    padding: 0 3px 0 8px;
}
.nav-sep::after {
    content: "";
    flex: 1;
    height: 1px;
    background-color: #d8d8d8;
}
.side-scroll {
    width: 15px;
    background-color: #f0f0f0;
    padding: 18px 6px 0 7px;
}
.side-thumb {
    width: 2px;
    height: 478px;
    background-color: #888;
}
.files {
    position: relative;
    width: 211px;
    flex: none;
    border-right: 1px solid #f0f0f0;
    padding-left: 18px;
    font-size: 11.5px;
}
.files-head {
    height: 29px;
    padding-left: 16px;
    line-height: 26px;
    color: #5a6b82;
}
.sort-up {
    position: absolute;
    left: 148px;
    top: 1px;
    width: 8px;
    height: 5px;
}
.file {
    display: flex;
    align-items: center;
    height: 31px;
    gap: 5px;
    padding-left: 4px;
    white-space: nowrap;
}
.file.selected {
    height: 27px;
    margin-top: 3px;
    background-color: #d9d9d9;
}
.file-ico {
    width: 16px;
    height: 16px;
}
.files-scroll {
    position: absolute;
    left: 3px;
    right: 0;
    bottom: 0;
    height: 15px;
    background-color: #f0f0f0;
    padding: 6px 0 0 16px;
}
.files-thumb {
    width: 58px;
    height: 2px;
    background-color: #888;
}
.md-preview {
    flex: 1;
    padding-left: 36px;
    color: #24292e;
}
.md-preview h1 {
    margin: 59px 0 0 -36px;
    padding: 0 0 8px 36px;
    height: 50px;
    font-size: 32px;
    line-height: 40px;
    font-weight: 500;
    border-bottom: 1px solid #eaecef;
}
.md-preview ul {
    margin: 16px 0 0;
    padding-left: 40px;
    font-size: 15.2px;
    line-height: 24px;
}
.statusbar {
    flex: 1;
    display: flex;
    align-items: center;
    padding-left: 13px;
    color: #333;
    font-size: 11.5px;
    white-space: nowrap;
}
.st-sep {
    width: 1px;
    height: 15px;
    background-color: #e4e4e4;
}
.st-count {
    width: 44px;
}
.st-sel {
    margin-left: 11px;
    width: 105px;
}
.st-size {
    width: 53px;
}
.view-btns {
    display: flex;
    align-items: center;
    gap: 3px;
    margin-left: auto;
    margin-right: 7px;
}
.vbtn {
    width: 16px;
    height: 16px;
    display: flex;
    align-items: center;
    justify-content: center;
    background-color: #f5f5f5;
}
.vbtn svg {
    width: 12px;
    height: 12px;
}
.vbtn.on {
    width: 22px;
    height: 23px;
    background-color: #cfe4f3;
    border: 1px solid #2ea0e0;
}

/* red dotted annotations */
.marks {
    position: absolute;
    left: 0;
    top: 0;
    width: 1873px;
    height: 780px;
    pointer-events: none;
}
.mark-lines {
    fill: none;
    stroke: #f00;
    stroke-width: 4;
    stroke-dasharray: 4 4;
}
```
